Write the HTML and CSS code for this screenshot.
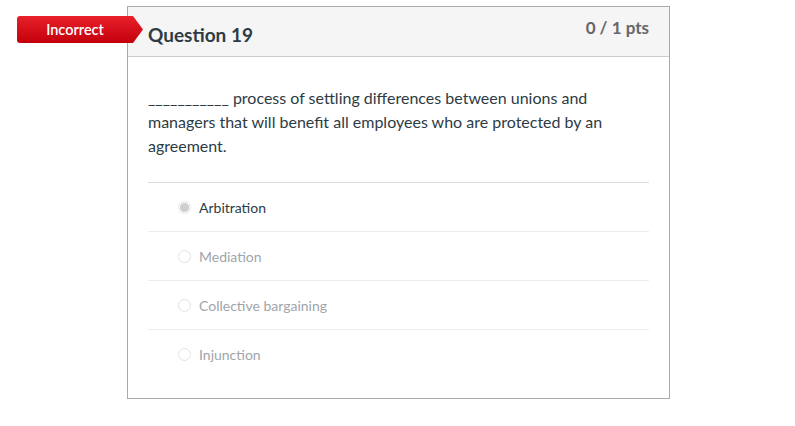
FILE: index.html
```html
<!DOCTYPE html>
<html lang="en">
<head>
  <meta charset="UTF-8" />
  <title>Question 19</title>
  <link rel="stylesheet" href="styles.css">
</head>
<body>

  <div class="quiz">
    <div class="badge">Incorrect</div>

    <div class="question">
      <div class="question-header">
        <h2>Question 19</h2>
        <span class="points">0 / 1 pts</span>
      </div>

      <div class="question-body">
        <p class="question-text">___________ process of settling differences between unions and managers that will benefit all employees who are protected by an agreement.</p>

        <div class="answers">
          <label class="answer selected"><span class="radio"></span>Arbitration</label>
          <label class="answer"><span class="radio"></span>Mediation</label>
          <label class="answer"><span class="radio"></span>Collective bargaining</label>
          <label class="answer"><span class="radio"></span>Injunction</label>
        </div>
      </div>
    </div>
  </div>

</body>
</html>
```

FILE: styles.css
```css
body {
  margin: 0;
  font-family: Lato, "Liberation Sans", sans-serif;
  background: #fff;
  color: #2d3b45;
}

.quiz {
  position: relative;
  padding: 6px 0 0 127px;
}

.badge {
  position: absolute;
  left: 17px;
  top: 16px;
  width: 116px;
  height: 27px;
  line-height: 27px;
  padding-right: 10px;
  text-align: center;
  color: white;
  font-size: 14.5px;
  font-weight: 600;
  background: linear-gradient(#e8212b, #c3000a);
  border-radius: 3px 0 0 3px;
  clip-path: polygon(0 0, 116px 0, 126px 50%, 116px 100%, 0 100%);
  z-index: 1;
}

.question {
  width: 543px;
  box-sizing: border-box;
  border: 1px solid #aaa;
}

.question-header {
  height: 50px;
  box-sizing: border-box;
  background: #f5f5f5;
  border-bottom: 1px solid #c7cdd1;
  display: flex;
  justify-content: space-between;
  align-items: flex-start;
  padding: 0 20px;
}

.question-header h2 {
  margin: 17px 0 0;
  font-size: 19px;
  font-weight: bold;
  line-height: 22px;
}

.points {
  margin-top: 10px;
  font-size: 17px;
  font-weight: bold;
  color: #666;
  line-height: 22px;
}

.question-body {
  padding: 29px 20px 20px;
}

.question-text {
  margin: 0 0 24px;
  font-size: 16px;
  line-height: 24px;
}

.answers {
  border-top: 1px solid #dcdfe1;
}

.answer {
  display: flex;
  align-items: center;
  height: 48px;
  padding-left: 30px;
  font-size: 14px;
  color: #a0a5a9;
  border-bottom: 1px solid #ecedee;
}

.answer:last-child {
  border-bottom: none;
}

.answer.selected {
  color: #2d3b45;
}

.radio {
  width: 11px;
  height: 11px;
  border-radius: 50%;
  border: 1px solid #e3e3e3;
  background: #fff;
  margin-right: 8px;
}

.answer.selected .radio {
  background: radial-gradient(circle, #cfcfcf 55%, #fff 62%);
}
```
